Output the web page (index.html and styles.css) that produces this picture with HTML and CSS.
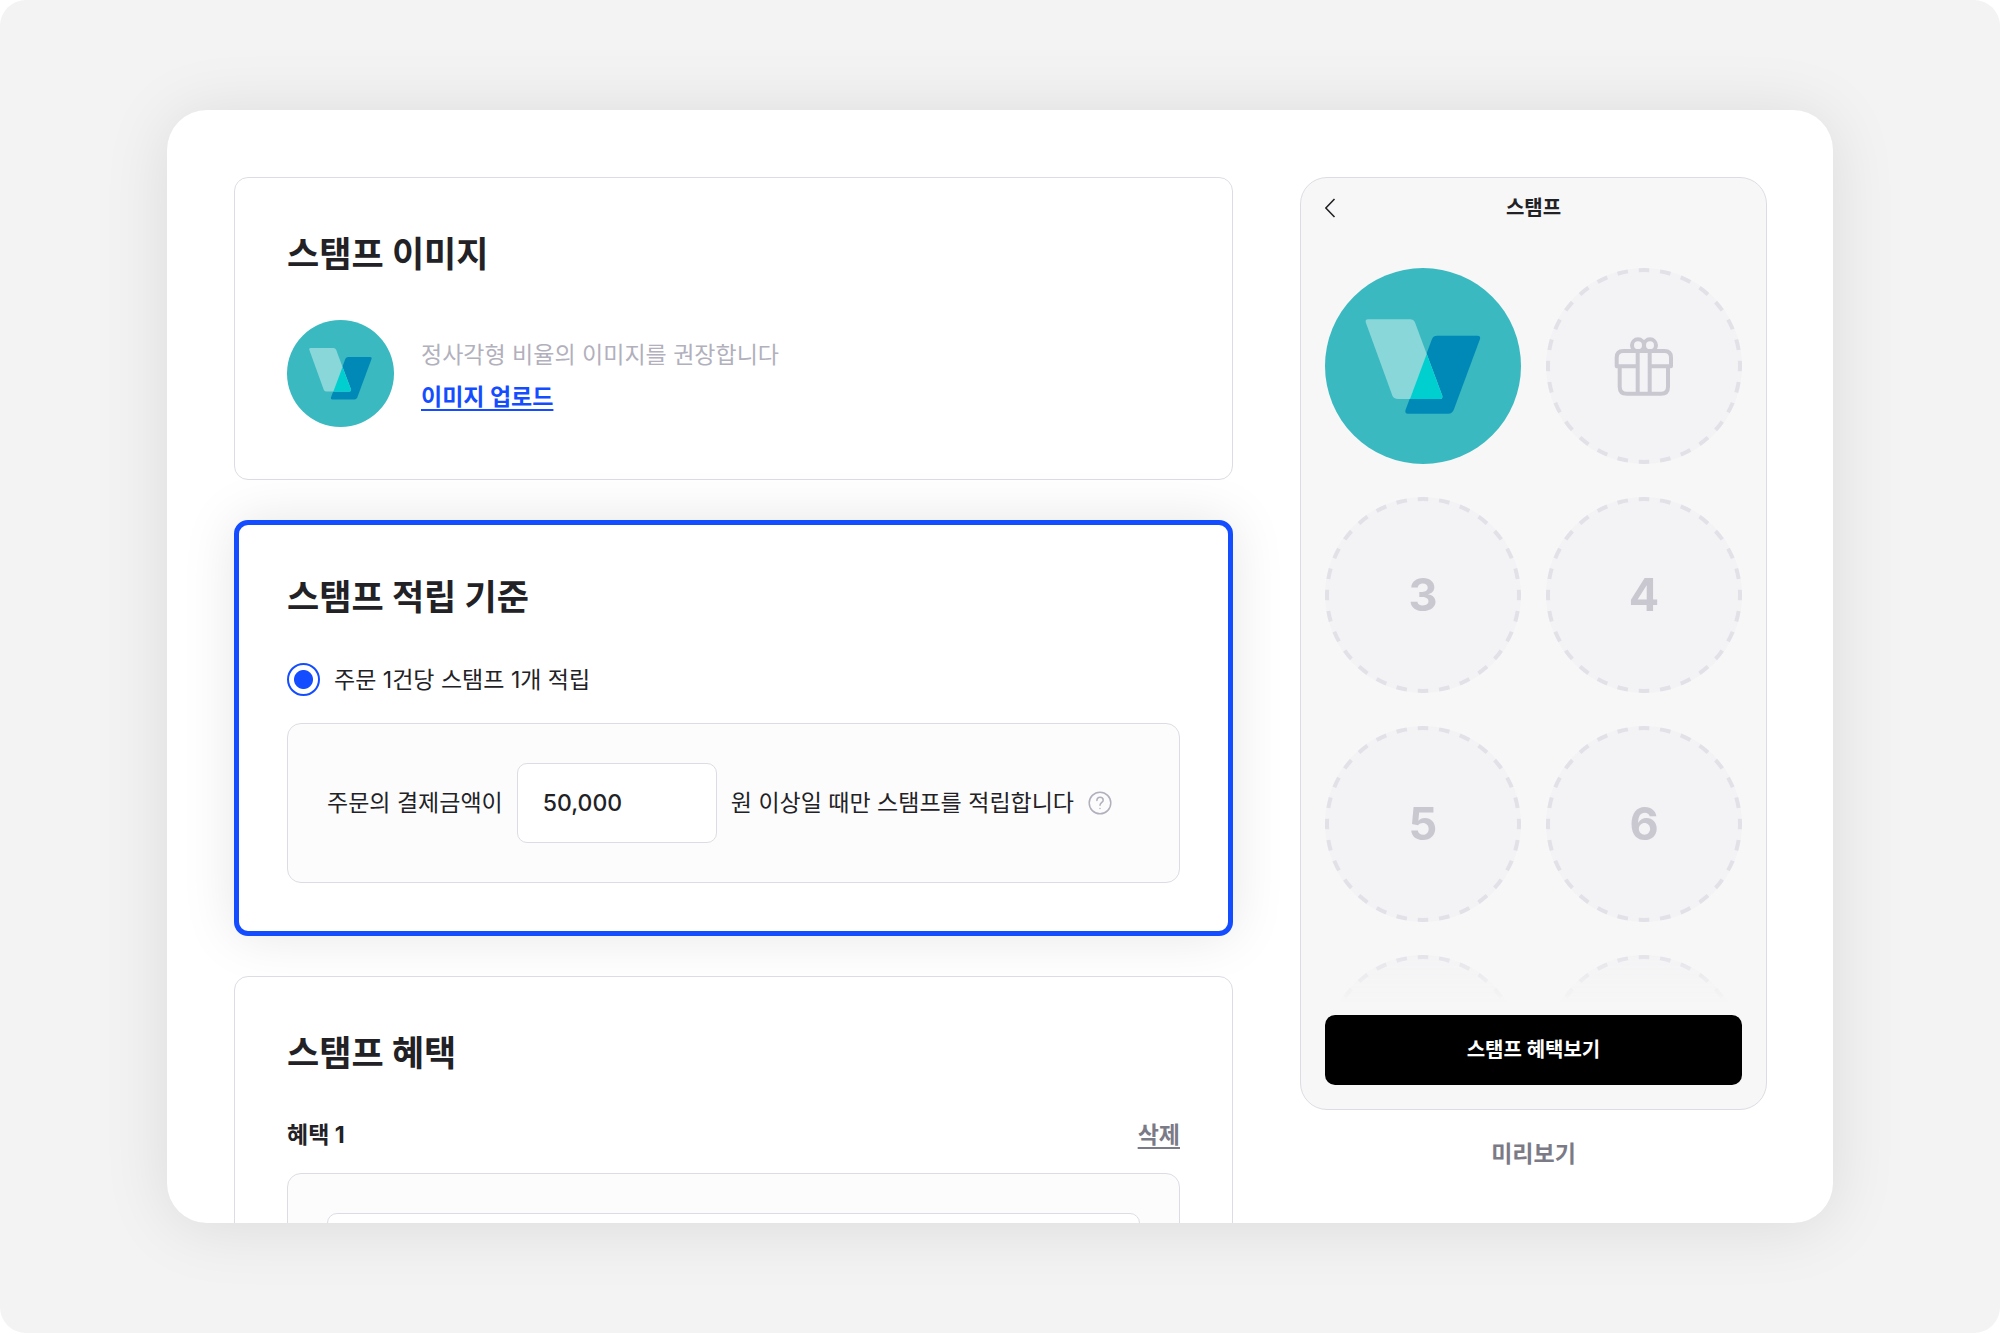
FILE: index.html
```html
<!DOCTYPE html>
<html lang="ko">
<head>
  <meta charset="UTF-8">
  <meta name="viewport" content="width=device-width, initial-scale=1">
  <title>스탬프 설정</title>
  <link rel="stylesheet" href="styles.css">
</head>
<body>

<!-- 공통 심볼 -->
<svg class="symbols" aria-hidden="true">
  <symbol id="logo" viewBox="0 0 196 196">
    <circle cx="98" cy="98" r="98" fill="#3ab9c1"/>
    <path fill="#0089b7" d="M112 67.7H152.5Q155.8 67.7 155 71L128.7 142Q127 145.7 123.5 145.7H83Q79.5 145.7 80.5 142L107 71Q108.5 67.7 112 67.7Z"/>
    <path fill="#89d7d9" d="M43 51.3H85Q88.6 51.3 90 54.5L117.2 127.5Q118 131 115 131H73Q69 131 67.5 128L40.8 54.5Q40 51.3 43 51.3Z"/>
    <path fill="#00cfd0" d="M101.7 86L117.2 127.5Q118 131 115 131H85Z"/>
  </symbol>
  <symbol id="ring" viewBox="0 0 196 196">
    <circle cx="98" cy="98" r="98" fill="#f3f3f5"/>
    <circle cx="98" cy="98" r="96" fill="none" stroke="#e2e1e8" stroke-width="4" pathLength="56" stroke-dasharray="1 1" stroke-dashoffset="0.5"/>
  </symbol>
</svg>

<div class="page">
  <main class="panel">

    <div class="settings">
      <!-- 스탬프 이미지 -->
      <section class="card">
        <h2>스탬프 이미지</h2>
        <div class="upload">
          <svg class="upload-image"><use href="#logo"/></svg>
          <div class="upload-text">
            <p>정사각형 비율의 이미지를 권장합니다</p>
            <a href="#">이미지 업로드</a>
          </div>
        </div>
      </section>

      <!-- 적립 기준 -->
      <section class="card card-active">
        <h2>스탬프 적립 기준</h2>
        <label class="radio">
          <input type="radio" name="rule" checked>
          <span>주문 1건당 스탬프 1개 적립</span>
        </label>
        <div class="box condition">
          <label for="minAmount">주문의 결제금액이</label>
          <input type="text" id="minAmount" value="50,000">
          <span>원 이상일 때만 스탬프를 적립합니다</span>
          <button type="button" class="help" aria-label="도움말">
            <svg viewBox="0 0 24 24" fill="none" stroke="currentColor" stroke-width="1.5" stroke-linecap="round">
              <circle cx="12" cy="12" r="10.8"/>
              <path d="M8.9 9.4C8.9 7.4 10.2 6.3 12 6.3S15.2 7.4 15.2 9.2C15.2 11.4 12 11.5 12 14.3"/>
              <path d="M12 17.4V17.6"/>
            </svg>
          </button>
        </div>
      </section>

      <!-- 혜택 -->
      <section class="card">
        <h2>스탬프 혜택</h2>
        <div class="benefit-head">
          <h3>혜택 1</h3>
          <a href="#">삭제</a>
        </div>
        <div class="box">
          <div class="benefit-field"></div>
        </div>
      </section>
    </div>

    <!-- 미리보기 -->
    <aside class="preview">
      <div class="phone">
        <header class="phone-header">
          <button type="button" class="back" aria-label="뒤로">
            <svg viewBox="0 0 12 20" fill="none" stroke="currentColor" stroke-width="1.6"><path d="M9.5 1L0.8 10L9.5 19"/></svg>
          </button>
          <h1>스탬프</h1>
        </header>
        <div class="stamps">
          <div class="stamp"><svg class="ring"><use href="#logo"/></svg></div>
          <div class="stamp">
            <svg class="ring"><use href="#ring"/></svg>
            <svg class="gift" viewBox="0 0 60 60" fill="none" stroke="currentColor" stroke-width="4" stroke-linejoin="round">
              <circle cx="24" cy="9.3" r="6"/>
              <circle cx="36" cy="9.3" r="6"/>
              <path d="M23.7 30.3H2.7V21.5Q2.7 15 9.2 15H50.5Q57 15 57 21.5V30.3H35.7"/>
              <path d="M5.7 30.3V50.7Q5.7 57.7 12.7 57.7H47Q54 57.7 54 50.7V30.3"/>
              <path d="M23.7 15V57.7M35.7 15V57.7"/>
            </svg>
          </div>
          <div class="stamp"><svg class="ring"><use href="#ring"/></svg><span>3</span></div>
          <div class="stamp"><svg class="ring"><use href="#ring"/></svg><span>4</span></div>
          <div class="stamp"><svg class="ring"><use href="#ring"/></svg><span>5</span></div>
          <div class="stamp"><svg class="ring"><use href="#ring"/></svg><span>6</span></div>
          <div class="stamp"><svg class="ring"><use href="#ring"/></svg></div>
          <div class="stamp"><svg class="ring"><use href="#ring"/></svg></div>
        </div>
        <button type="button" class="benefit-btn">스탬프 혜택보기</button>
      </div>
      <p class="caption">미리보기</p>
    </aside>

  </main>
</div>

</body>
</html>
```
FILE: styles.css
```css
* {
  box-sizing: border-box;
}
body {
  margin: 0;
  background: #fff;
  color: #222226;
  font-family: Inter, "Noto Sans CJK KR", sans-serif;
  font-size: 23px;
  line-height: 32px;
}
h1, h2, h3, p {
  margin: 0;
}
button, input {
  font: inherit;
  color: inherit;
}
.symbols {
  display: none;
}
.page {
  height: 100vh;
  min-height: 800px;
  padding: 110px 167px;
  background: #f3f3f3;
  border-radius: 26px;
}
.panel {
  display: flex;
  gap: 67px;
  height: 100%;
  padding: 67px 66px 0 67px;
  background: #fff;
  border-radius: 40px;
  box-shadow: 0 4px 67px rgba(0,0,0,0.1);
  overflow: hidden;
}

/* 설정 카드 */
.settings {
  flex: 1;
  min-width: 0;
  display: flex;
  flex-direction: column;
  gap: 40px;
}
.card {
  flex: none;
  padding: 52px;
  background: #fff;
  border: 1px solid #dddce4;
  border-radius: 14px;
}
.card h2 {
  margin-bottom: 41px;
  font-size: 35px;
  line-height: 49px;
  font-weight: 700;
}
.card-active {
  padding: 48px;
  border: 5px solid #134dff;
  box-shadow: 0 0 54px rgba(0,0,0,0.1);
}
.upload {
  display: flex;
  align-items: center;
  gap: 27px;
}
.upload-image {
  width: 107px;
  height: 107px;
}
.upload-text {
  display: flex;
  flex-direction: column;
  align-items: flex-start;
  gap: 10px;
  padding-top: 5px;
  color: #b1b0bc;
}
.upload-text a {
  color: #134dff;
  font-weight: 700;
  text-underline-offset: 4px;
}
.radio {
  display: flex;
  align-items: center;
  gap: 14px;
  margin-bottom: 27px;
}
.radio input {
  appearance: none;
  width: 33px;
  height: 33px;
  margin: 0;
  border: 2px solid #134dff;
  border-radius: 50%;
  background: radial-gradient(circle, #134dff 9px, #fff 10px);
}
.box {
  padding: 39px;
  background: #fcfcfc;
  border: 1px solid #dddce4;
  border-radius: 14px;
}
.condition {
  display: flex;
  align-items: center;
  gap: 14px;
}
.condition input {
  width: 200px;
  height: 80px;
  padding: 0 25px;
  background: #fff;
  border: 1px solid #dddce4;
  border-radius: 10px;
  font-weight: 500;
}
.help {
  display: flex;
  padding: 0;
  border: 0;
  background: none;
  color: #b1b0bc;
}
.help svg {
  width: 24px;
  height: 24px;
}
.benefit-head {
  display: flex;
  justify-content: space-between;
  margin-bottom: 22px;
}
.benefit-head h3 {
  font-size: 23px;
  font-weight: 700;
}
.benefit-head a {
  color: #7b7a87;
  font-weight: 700;
  text-underline-offset: 4px;
}
.benefit-field {
  height: 80px;
  background: #fff;
  border: 1px solid #dddce4;
  border-radius: 10px;
}

/* 미리보기 */
.preview {
  width: 467px;
  display: flex;
  flex-direction: column;
}
.phone {
  flex: 1;
  min-height: 0;
  display: flex;
  flex-direction: column;
  padding: 0 24px 24px;
  background: #f7f7f7;
  border: 1px solid #dddce4;
  border-radius: 27px;
}
.phone-header {
  display: grid;
  grid-template-columns: 12px 1fr 12px;
  align-items: center;
  height: 60px;
  margin-bottom: 30px;
}
.phone-header h1 {
  font-size: 20px;
  font-weight: 700;
  text-align: center;
}
.back {
  display: flex;
  padding: 0;
  border: 0;
  background: none;
}
.back svg {
  width: 12px;
  height: 20px;
}
.stamps {
  flex: 1;
  min-height: 0;
  display: grid;
  grid-template-columns: 1fr 1fr;
  align-content: start;
  gap: 33px 25px;
  overflow: hidden;
  mask-image: linear-gradient(#000 calc(100% - 54px), transparent);
}
.stamp {
  display: grid;
  place-items: center;
  aspect-ratio: 1;
  color: #c9c8d0;
  font-size: 45px;
  font-weight: 700;
}
.stamp > * {
  grid-area: 1 / 1;
}
.ring {
  width: 100%;
  height: 100%;
}
.gift {
  width: 60px;
  height: 60px;
}
.benefit-btn {
  height: 70px;
  margin-top: 11px;
  border: 0;
  border-radius: 10px;
  background: #000;
  color: #fff;
  font-size: 20px;
  font-weight: 700;
}
.caption {
  padding: 28px 0 53px;
  color: #7b7a87;
  font-weight: 700;
  text-align: center;
}
```
